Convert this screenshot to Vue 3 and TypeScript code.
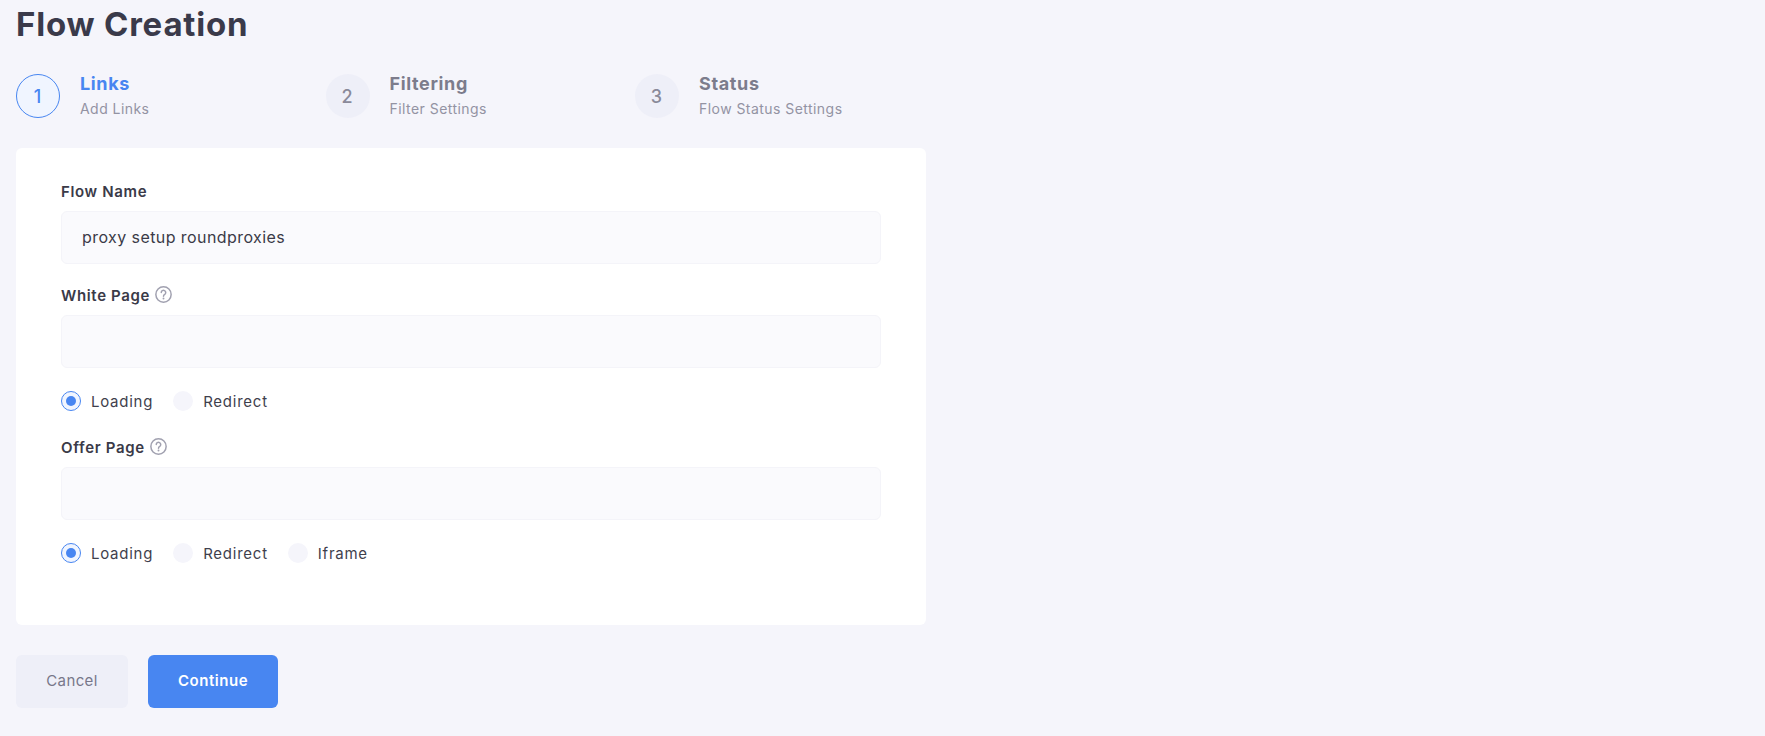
<script setup lang="ts">
import { ref } from 'vue';

const steps = [
  { num: 1, title: 'Links', sub: 'Add Links' },
  { num: 2, title: 'Filtering', sub: 'Filter Settings' },
  { num: 3, title: 'Status', sub: 'Flow Status Settings' },
];

const flowName = ref('proxy setup roundproxies');
const whitePage = ref('');
const offerPage = ref('');
const whiteMode = ref('Loading');
const offerMode = ref('Loading');
</script>

<template>
  <div class="page">
    <h1 class="title">Flow Creation</h1>

    <div class="steps">
      <div v-for="(s, i) in steps" :key="s.num" class="step" :class="{ active: i === 0 }">
        <div class="step-num">{{ s.num }}</div>
        <div class="step-text">
          <div class="step-title">{{ s.title }}</div>
          <div class="step-sub">{{ s.sub }}</div>
        </div>
      </div>
    </div>

    <div class="card">
      <label class="label first">Flow Name</label>
      <input v-model="flowName" class="field" type="text" />

      <label class="label">
        White Page
        <svg class="help" viewBox="0 0 16 16" fill="none">
          <circle cx="8" cy="8" r="7.2" stroke="#a1a1b0" stroke-width="1.4" />
          <path d="M5.9 6.2a2.1 2.1 0 1 1 3.3 1.7c-.8.5-1.2.9-1.2 1.7" stroke="#a1a1b0" stroke-width="1.4" stroke-linecap="round" />
          <circle cx="8" cy="11.8" r=".9" fill="#a1a1b0" />
        </svg>
      </label>
      <input v-model="whitePage" class="field" type="text" />
      <div class="radios">
        <label v-for="m in ['Loading', 'Redirect']" :key="m" class="radio" @click="whiteMode = m">
          <span class="dot" :class="{ on: whiteMode === m }"></span>
          {{ m }}
        </label>
      </div>

      <label class="label after-radios">
        Offer Page
        <svg class="help" viewBox="0 0 16 16" fill="none">
          <circle cx="8" cy="8" r="7.2" stroke="#a1a1b0" stroke-width="1.4" />
          <path d="M5.9 6.2a2.1 2.1 0 1 1 3.3 1.7c-.8.5-1.2.9-1.2 1.7" stroke="#a1a1b0" stroke-width="1.4" stroke-linecap="round" />
          <circle cx="8" cy="11.8" r=".9" fill="#a1a1b0" />
        </svg>
      </label>
      <input v-model="offerPage" class="field" type="text" />
      <div class="radios">
        <label v-for="m in ['Loading', 'Redirect', 'Iframe']" :key="m" class="radio" @click="offerMode = m">
          <span class="dot" :class="{ on: offerMode === m }"></span>
          {{ m }}
        </label>
      </div>
    </div>

    <div class="actions">
      <button class="btn cancel">Cancel</button>
      <button class="btn primary">Continue</button>
    </div>
  </div>
</template>

<style>
html,
body {
  background: #f5f5fb;
}
</style>

<style scoped>
.page {
  box-sizing: border-box;
  width: 1765px;
  height: 736px;
  padding: 0 16px;
  overflow: hidden;
  background: #f5f5fb;
  font-family: Inter, "Liberation Sans", sans-serif;
  color: #3a3a48;
}

.title {
  margin: 0;
  height: 50px;
  line-height: 48px;
  font-size: 33px;
  font-weight: 700;
  letter-spacing: 0.8px;
  color: #3a3a4a;
}

.steps {
  display: flex;
  margin-top: 24px;
}

.step {
  display: flex;
  align-items: flex-start;
  width: 309.5px;
  height: 44px;
}

.step-num {
  box-sizing: border-box;
  flex: none;
  width: 44px;
  height: 44px;
  padding-right: 1px;
  border-radius: 50%;
  background: #eeeff8;
  color: #8a8a9a;
  display: flex;
  align-items: center;
  justify-content: center;
  font-size: 18px;
  font-weight: 500;
}

.step.active .step-num {
  background: #f0f5ff;
  border: 1px solid #4886f1;
  color: #4886f1;
}

.step-text {
  margin-left: 20px;
}

.step-title {
  margin-top: -2px;
  line-height: 24px;
  font-size: 18px;
  font-weight: 700;
  letter-spacing: 0.65px;
  color: #7c7c8c;
}

.step.active .step-title {
  color: #4886f1;
}

.step-sub {
  margin-top: 3px;
  line-height: 20px;
  font-size: 14px;
  letter-spacing: 0.45px;
  color: #9393a3;
}

.card {
  box-sizing: border-box;
  width: 910px;
  height: 477px;
  margin-top: 30px;
  padding: 31px 45px 0;
  background: #fff;
  border-radius: 6px;
}

.label {
  display: flex;
  align-items: center;
  gap: 5px;
  height: 24px;
  margin-top: 19px;
  font-size: 15px;
  font-weight: 600;
  letter-spacing: 0.65px;
  color: #3a3a48;
}

.label.first {
  margin-top: 0;
}

.label.after-radios {
  margin-top: 24px;
}

.help {
  width: 17px;
  height: 17px;
  margin-top: -2px;
}

.field {
  display: block;
  box-sizing: border-box;
  width: 100%;
  height: 53px;
  margin-top: 8px;
  padding: 0 20px 2px;
  background: #fafafd;
  border: 1px solid #f4f4f9;
  border-radius: 6px;
  outline: none;
  font-family: inherit;
  font-size: 16px;
  letter-spacing: 0.42px;
  color: #3a3a48;
}

.radios {
  display: flex;
  gap: 20px;
  margin-top: 23px;
  height: 20px;
}

.radio {
  display: flex;
  align-items: center;
  gap: 10px;
  font-size: 15px;
  letter-spacing: 0.75px;
  color: #3f3f4d;
}

.dot {
  box-sizing: border-box;
  position: relative;
  width: 20px;
  height: 20px;
  border-radius: 50%;
  background: #f5f5fb;
}

.dot.on {
  background: #f0f5ff;
  border: 1px solid #4886f1;
}

.dot.on::after {
  content: "";
  position: absolute;
  left: 4px;
  top: 4px;
  width: 10px;
  height: 10px;
  border-radius: 50%;
  background: #4886f1;
}

.actions {
  display: flex;
  gap: 20px;
  margin-top: 30px;
}

.btn {
  height: 53px;
  padding: 0 0 2px;
  border: none;
  border-radius: 6px;
  font-family: inherit;
  font-size: 15px;
}

.cancel {
  width: 112px;
  background: #eeeff8;
  letter-spacing: 0.4px;
  color: #77778a;
}

.primary {
  width: 130px;
  background: #4886f1;
  color: #fff;
  letter-spacing: 0.55px;
  font-weight: 600;
}
</style>
